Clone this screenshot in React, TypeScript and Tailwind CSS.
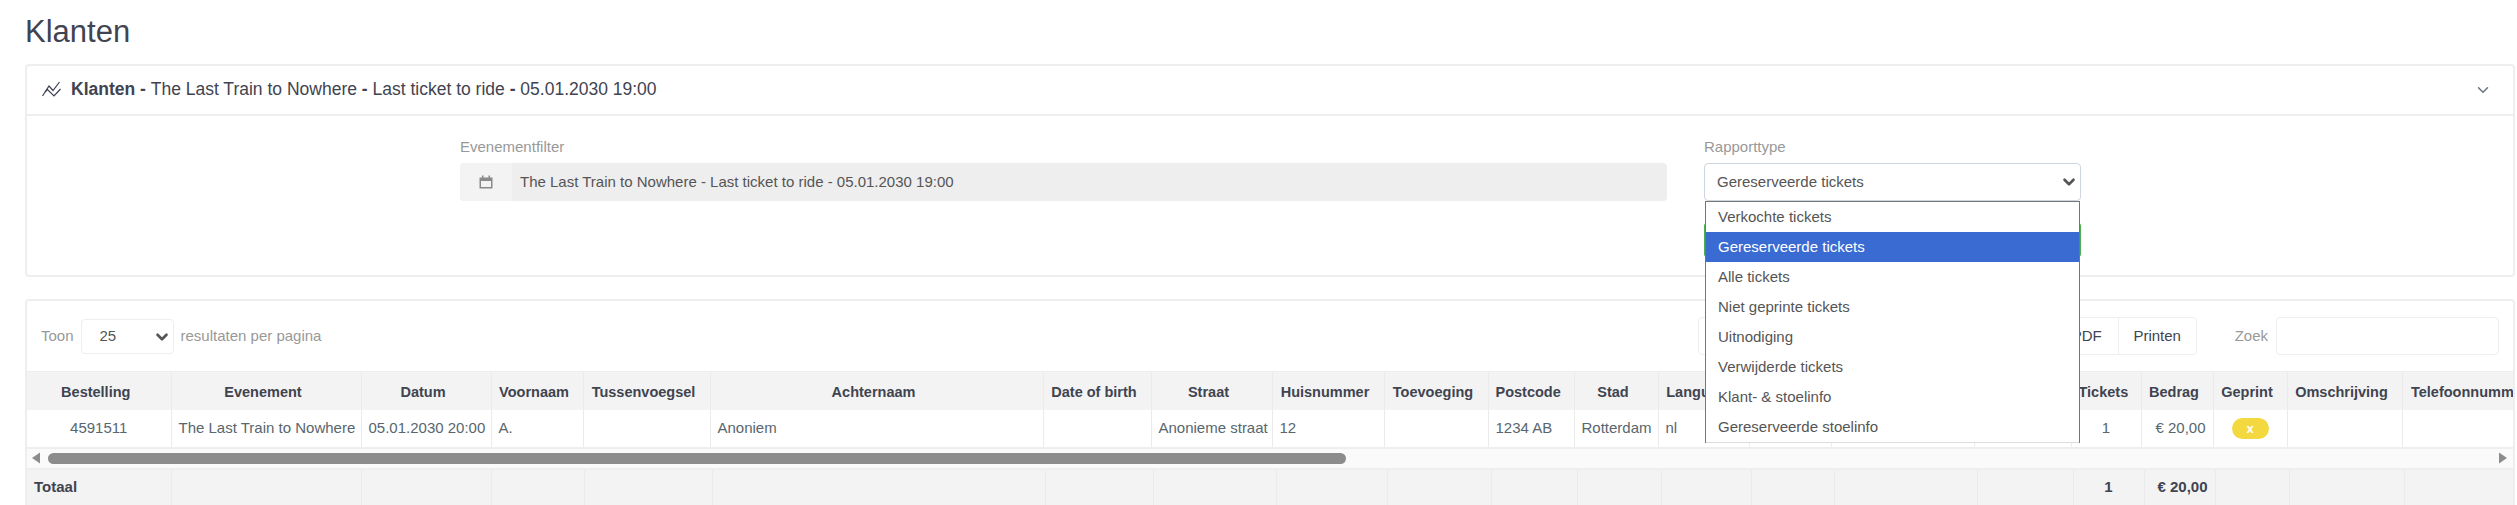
import React from 'react';
import { ChevronDown } from 'lucide-react';

const headerCols = [144, 190, 130, 92, 127, 333, 108, 121, 112, 104, 86, 84, 91, 82, 143, 97, 70, 72, 74, 115, 140];
const footCols = [144, 190, 130, 93, 128, 333, 108, 123, 111, 104, 86, 84, 90, 83, 143, 96, 71, 71, 74, 115, 140];

const headers = [
  'Bestelling',
  'Evenement',
  'Datum',
  'Voornaam',
  'Tussenvoegsel',
  'Achternaam',
  'Date of birth',
  'Straat',
  'Huisnummer',
  'Toevoeging',
  'Postcode',
  'Stad',
  'Language',
  '',
  '',
  '',
  'Tickets',
  'Bedrag',
  'Geprint',
  'Omschrijving',
  'Telefoonnummer',
];

const reportOptions = [
  'Verkochte tickets',
  'Gereserveerde tickets',
  'Alle tickets',
  'Niet geprinte tickets',
  'Uitnodiging',
  'Verwijderde tickets',
  'Klant- & stoelinfo',
  'Gereserveerde stoelinfo',
];

const totalWidth = headerCols.reduce((a, b) => a + b, 0);

const TrendIcon = () => (
  <svg width="19" height="16" viewBox="0 0 19 16" fill="none" stroke="#3a3f51" strokeWidth="1.2">
    <path d="M0.5 15 L7 5 L11 9.5 L17.5 1" />
    <path d="M3 11 L5.5 8.5 L12 15 L18.5 8" />
  </svg>
);

const CalendarIcon = () => (
  <svg width="14" height="14" viewBox="0 0 14 14" fill="#8a8a8a">
    <path d="M0.5 2.5H3V0.5H4.5V2.5H9.5V0.5H11V2.5H13.5V13.5H0.5V2.5ZM2 6V12H12V6H2Z" />
  </svg>
);

const App = () => {
  return (
    <div className="h-[505px] w-[2517px] overflow-hidden bg-white pl-[25px] pr-[2px] font-['Liberation_Sans',Arial,sans-serif] text-[15px] text-[#58666e]">
      <h1 className="h-[64px] pt-[14px] text-[31px] leading-[36px] font-normal text-[#3f4450]">Klanten</h1>

      {/* report filter card */}
      <div className="relative h-[213px] rounded-[4px] border-2 border-[#eeeeee]">
        <div className="flex h-[50px] items-center justify-between border-b-2 border-[#eeeeee] pr-[21px] pl-[15px]">
          <div className="flex items-center gap-[10px] pb-[2px] text-[17.5px] text-[#3f4450]">
            <TrendIcon />
            <span>
              <b>Klanten - </b>The Last Train to Nowhere <b>-</b> Last ticket to ride <b>-</b> 05.01.2030 19:00
            </span>
          </div>
          <ChevronDown size={18} strokeWidth={2} className="text-[#6b7280]" />
        </div>

        <div className="flex gap-[37px] pt-[21px] pl-[433px]">
          <div className="w-[1207px]">
            <label className="mb-[6px] block h-[20px] leading-[20px] text-[#999999]">Evenementfilter</label>
            <div className="flex h-[38px] overflow-hidden rounded-[4px] bg-[#eeeeee]">
              <div className="flex w-[52px] items-center justify-center bg-[#f3f3f3]">
                <CalendarIcon />
              </div>
              <div className="flex items-center pl-[8px] text-[#555555]">
                The Last Train to Nowhere - Last ticket to ride - 05.01.2030 19:00
              </div>
            </div>
          </div>

          <div className="w-[377px]">
            <label className="mb-[6px] block h-[20px] leading-[20px] text-[#999999]">Rapporttype</label>
            <div className="relative">
              <select
                defaultValue="Gereserveerde tickets"
                className="block h-[38px] w-full appearance-none rounded-[4px] border border-[#cfd6dd] bg-white pr-[24px] pl-[12px] text-[#555555]"
              >
                {reportOptions.map((option) => (
                  <option key={option}>{option}</option>
                ))}
              </select>
              <ChevronDown size={18} strokeWidth={3.5} className="pointer-events-none absolute top-[10px] right-[3px] text-[#555555]" />
            </div>
            <button className="mt-[22px] h-[34px] w-full rounded-[3px] bg-[#4caf50]" />
          </div>
        </div>
      </div>

      {/* results card */}
      <div className="relative mt-[22px] h-[240px] overflow-hidden rounded-t-[4px] border-x-2 border-t-2 border-[#eeeeee]">
        <div className="flex h-[70px] items-center justify-between px-[14px]">
          <div className="flex items-center gap-[7px] text-[#999999]">
            <span>Toon</span>
            <div className="relative">
              <select
                defaultValue="25"
                className="block h-[35px] w-[93px] appearance-none rounded-[4px] border border-[#eeeeee] bg-white pr-[24px] pl-[18px] text-[#555555]"
              >
                <option>25</option>
              </select>
              <ChevronDown size={18} strokeWidth={3.5} className="pointer-events-none absolute top-[9px] right-[3px] text-[#555555]" />
            </div>
            <span>resultaten per pagina</span>
          </div>

          <div className="flex items-center">
            <div className="flex h-[38px] w-[499px] rounded-[4px] border border-[#eeeeee] text-[#3f4450]">
              <div className="flex-1" />
              <div className="flex items-center px-[16px]">PDF</div>
              <div className="flex w-[78px] items-center justify-center border-l border-[#eeeeee]">Printen</div>
            </div>
            <span className="ml-[38px] text-[#999999]">Zoek</span>
            <input className="ml-[8px] h-[38px] w-[223px] rounded-[4px] border border-[#eeeeee] bg-white" />
          </div>
        </div>

        <table className="table-fixed border-t border-[#eeeeee]" style={{ width: totalWidth }}>
          <colgroup>
            {headerCols.map((w, i) => (
              <col key={i} style={{ width: w }} />
            ))}
          </colgroup>
          <thead>
            <tr className="h-[38px] bg-[#f3f3f3] text-[#3f4450]">
              {headers.map((label, i) => (
                <th key={i} className="overflow-hidden border-l border-[#ebebeb] pt-[5px] pr-[13px] pl-[7px] text-center text-[14.5px] font-bold whitespace-nowrap first:border-l-0">
                  {label}
                </th>
              ))}
            </tr>
          </thead>
          <tbody>
            <tr className="h-[38px] border-b-2 border-[#eeeeee]">
              <td className="border-l border-[#ebebeb] px-[7px] text-center first:border-l-0">4591511</td>
              <td className="border-l border-[#ebebeb] px-[7px] whitespace-nowrap">The Last Train to Nowhere</td>
              <td className="border-l border-[#ebebeb] px-[7px] whitespace-nowrap">05.01.2030 20:00</td>
              <td className="border-l border-[#ebebeb] px-[7px]">A.</td>
              <td className="border-l border-[#ebebeb]" />
              <td className="border-l border-[#ebebeb] px-[7px]">Anoniem</td>
              <td className="border-l border-[#ebebeb]" />
              <td className="border-l border-[#ebebeb] px-[7px] whitespace-nowrap">Anonieme straat</td>
              <td className="border-l border-[#ebebeb] px-[7px]">12</td>
              <td className="border-l border-[#ebebeb]" />
              <td className="border-l border-[#ebebeb] px-[7px]">1234 AB</td>
              <td className="border-l border-[#ebebeb] px-[7px]">Rotterdam</td>
              <td className="border-l border-[#ebebeb] px-[7px]">nl</td>
              <td className="border-l border-[#ebebeb]" />
              <td className="border-l border-[#ebebeb]" />
              <td className="border-l border-[#ebebeb]" />
              <td className="border-l border-[#ebebeb] text-center">1</td>
              <td className="border-l border-[#ebebeb] px-[7px] text-right whitespace-nowrap">€ 20,00</td>
              <td className="border-l border-[#ebebeb] text-center">
                <span className="inline-flex h-[21px] w-[37px] items-center justify-center rounded-full bg-[#f4d83f] text-[13px] leading-none font-bold text-white">
                  x
                </span>
              </td>
              <td className="border-l border-[#ebebeb]" />
              <td className="border-l border-[#ebebeb]" />
            </tr>
          </tbody>
        </table>

        {/* horizontal scrollbar */}
        <div className="flex h-[19px] items-center bg-[#fafafa] pr-[5px] pl-[4px]">
          <svg width="10" height="12" viewBox="0 0 10 12" fill="#8c8c8c">
            <path d="M9 0.5V11.5L1 6Z" />
          </svg>
          <div className="ml-[7px] h-[11px] w-[1298px] rounded-full bg-[#8c8c8c]" />
          <svg width="10" height="12" viewBox="0 0 10 12" fill="#8c8c8c" className="ml-auto">
            <path d="M1 0.5V11.5L9 6Z" />
          </svg>
        </div>

        <table className="table-fixed border-t-2 border-[#eeeeee] font-bold text-[#3f4450]" style={{ width: totalWidth }}>
          <colgroup>
            {footCols.map((w, i) => (
              <col key={i} style={{ width: w }} />
            ))}
          </colgroup>
          <tfoot>
            <tr className="h-[36px] bg-[#f3f3f3]">
              {footCols.map((_, i) => (
                <td
                  key={i}
                  className={`border-l border-[#ebebeb] first:border-l-0 ${i === 0 ? 'pl-[7px]' : ''} ${i === 16 ? 'text-center' : ''} ${i === 17 ? 'pr-[7px] text-right whitespace-nowrap' : ''}`}
                >
                  {i === 0 ? 'Totaal' : i === 16 ? '1' : i === 17 ? '€ 20,00' : ''}
                </td>
              ))}
            </tr>
          </tfoot>
        </table>
      </div>

      {/* open native select list */}
      <div className="absolute top-[201px] left-[1705px] z-10 w-[375px] border-x border-t border-[#767676] bg-white text-[#555555]">
        {reportOptions.map((option) => (
          <div
            key={option}
            className={`flex h-[30px] items-center pl-[12px] ${option === 'Gereserveerde tickets' ? 'bg-[#3a6bd2] text-white' : ''}`}
          >
            {option}
          </div>
        ))}
        <div className="h-px bg-[#dddddd]" />
      </div>
    </div>
  );
};

export default App;
